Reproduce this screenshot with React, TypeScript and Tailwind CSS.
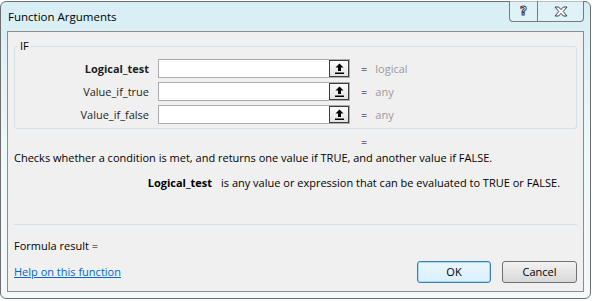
import React from 'react';

const args = [
  { name: 'Logical_test', type: 'logical', bold: true },
  { name: 'Value_if_true', type: 'any', bold: false },
  { name: 'Value_if_false', type: 'any', bold: false },
];

function RefEditButton() {
  return (
    <div className="w-[20px] h-full border border-[#3c3c3c] bg-gradient-to-b from-[#fdfdfd] to-[#e3e3e3] flex items-center justify-center">
      <svg width="9" height="11" viewBox="0 0 9 11">
        <path d="M4.5 0.5 L8.5 4.5 L6 4.5 L6 8 L3 8 L3 4.5 L0.5 4.5 Z" fill="#000" />
        <rect x="0" y="9.5" width="9" height="1.5" fill="#000" />
      </svg>
    </div>
  );
}

function ArgRow({ name, type, bold }: { name: string; type: string; bold: boolean }) {
  return (
    <div className="flex items-center h-[19px]">
      <div className={`w-[134px] text-right text-[#1e1e1e] ${bold ? 'font-bold' : ''}`}>{name}</div>
      <div className="ml-[9px] w-[192px] h-[19px] border border-[#abadb3] bg-white flex justify-end">
        <RefEditButton />
      </div>
      <span className="ml-[11px] text-black">=</span>
      <span className="ml-[8px] text-[#9a9a9a]">{type}</span>
    </div>
  );
}

export default function App() {
  return (
    <div className="w-[594px] h-[301px] bg-white overflow-hidden font-['Open_Sans',sans-serif] text-[11px] leading-[16px]">
      <div className="mt-[1px] w-[591px] h-[298px] rounded-[6px] border border-[#6e6e6e] bg-gradient-to-b from-[#d6eef5] via-[#eef8fa] to-[#f3f8f9] flex flex-col pl-[6px] pr-[6px] pb-[6px]">
        {/* title bar */}
        <div className="h-[29px] flex justify-between">
          <div className="pt-[7px] pl-[1px] text-[11.5px] text-black">Function Arguments</div>
          <div className="flex h-[21px] -mt-[1px]">
            <div className="w-[29px] border border-t-0 border-[#7a7a7a] rounded-bl-[4px] bg-[#e4f4f7]/60 flex items-center justify-center text-white font-bold text-[12px] [-webkit-text-stroke:1px_#3a3a4a] font-['DejaVu_Sans',sans-serif]">
              ?
            </div>
            <div className="w-[46px] border border-t-0 border-l-0 border-[#7a7a7a] rounded-br-[4px] bg-[#e4f4f7]/60 flex items-center justify-center">
              <svg width="14" height="11" viewBox="0 0 14 11">
                <path
                  d="M1 1 L4.6 1 L7 3.6 L9.4 1 L13 1 L9.2 5.5 L13 10 L9.4 10 L7 7.4 L4.6 10 L1 10 L4.8 5.5 Z"
                  fill="#fff"
                  stroke="#3a3a4a"
                  strokeWidth="1"
                  strokeLinejoin="round"
                />
              </svg>
            </div>
          </div>
        </div>

        {/* client area */}
        <div className="flex-1 border border-[#8d8d8d] bg-[#f0f0f0] flex flex-col text-black">
          <div className="relative mt-[14px] mx-[6px] border border-[#d5dfe5] rounded-[3px] pt-[12px] pb-[4px] flex flex-col gap-[4px]">
            <span className="absolute -top-[9px] left-[3px] px-[2px] bg-[#f0f0f0] text-black">IF</span>
            {args.map((a) => (
              <ArgRow key={a.name} name={a.name} type={a.type} bold={a.bold} />
            ))}
          </div>

          <div className="mt-[5px] pl-[353px]">=</div>
          <div className="pl-[6px]">
            Checks whether a condition is met, and returns one value if TRUE, and another value if FALSE.
          </div>
          <div className="mt-[9px] flex">
            <span className="w-[204px] text-right font-bold">Logical_test</span>
            <span className="ml-[9px]">is any value or expression that can be evaluated to TRUE or FALSE.</span>
          </div>

          <div className="mt-[33px] mx-[6px] h-px bg-[#d5dfe5]" />

          <div className="mt-[13px] pl-[6px]">Formula result =</div>

          <div className="mt-[7px] mx-[6px] flex items-center justify-between">
            <a className="text-[#0066cc] underline underline-offset-1 cursor-pointer">Help on this function</a>
            <div className="flex gap-[11px]">
              <button type="button" className="w-[74px] h-[22px] rounded-[3px] border border-[#3c7fb1] bg-gradient-to-b from-[#eaf6fd] to-[#d9f0fc] shadow-[inset_0_0_0_1px_#a7d9f5] text-black">
                OK
              </button>
              <button type="button" className="w-[75px] h-[22px] rounded-[3px] border border-[#707070] bg-gradient-to-b from-[#f2f2f2] to-[#d8d8d8] text-black">
                Cancel
              </button>
            </div>
          </div>
        </div>
      </div>
    </div>
  );
}
